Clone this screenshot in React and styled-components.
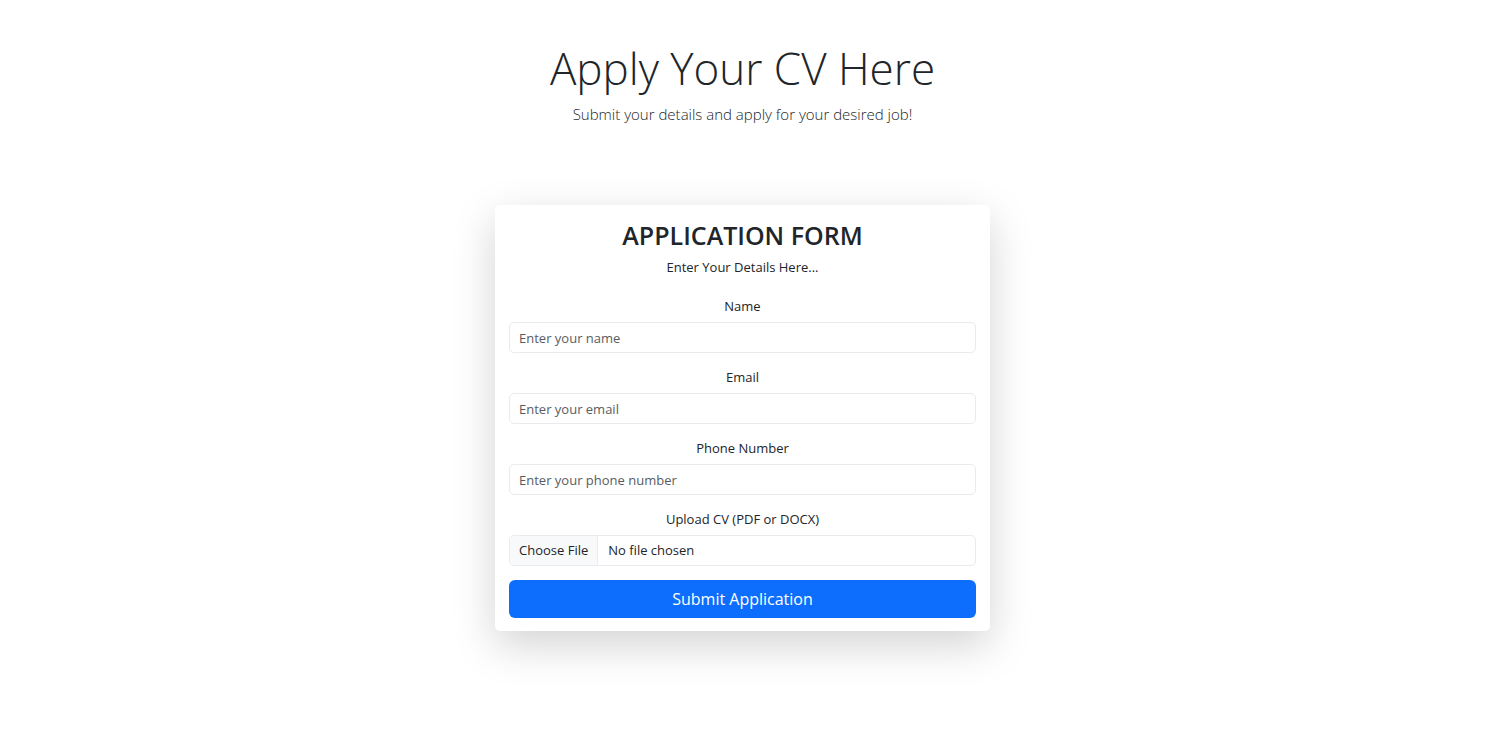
import React from "react";
import styled, { createGlobalStyle } from "styled-components";

const GlobalStyle = createGlobalStyle`
  *, *::before, *::after { box-sizing: border-box; }
  body {
    margin: 0;
    background: #fff;
    color: #212529;
    font-family: "Segoe UI", "Open Sans", "Noto Sans", sans-serif;
    font-size: 13px;
    line-height: 20px;
  }
`;

const Page = styled.main`
  display: flex;
  flex-direction: column;
  align-items: center;
  gap: 81px;
  min-height: 100vh;
  padding: 40px 16px;
  text-align: center;
`;

const Header = styled.header`
  display: flex;
  flex-direction: column;
  gap: 8px;
`;

const Title = styled.h1`
  margin: 0;
  font-size: 44px;
  font-weight: 300;
  line-height: 56px;
`;

const Lead = styled.p`
  margin: 0;
  font-size: 15px;
  font-weight: 300;
  line-height: 20px;
`;

const Card = styled.form`
  width: 100%;
  max-width: 495px;
  padding: 14px 14px 13px;
  background: #fff;
  border-radius: 5px;
  box-shadow: 0 14px 43px rgba(0, 0, 0, 0.175);
`;

const CardTitle = styled.h2`
  margin: 0 0 6px;
  font-size: 25px;
  font-weight: 600;
  line-height: 32px;
`;

const Intro = styled.p`
  margin: 0 0 19px;
`;

const Field = styled.div`
  display: flex;
  flex-direction: column;
  gap: 6px;
  margin-bottom: 14px;
`;

const Input = styled.input`
  width: 100%;
  height: 31px;
  padding: 4px 9px;
  border: 1px solid #e9ebee;
  border-radius: 5px;
  background: #fff;
  color: #212529;
  font: inherit;
  &::placeholder { color: #595c5f; opacity: 1; }
  &:focus { outline: 2px solid #86b7fe; }
`;

const FileInput = styled(Input)`
  padding: 0;
  line-height: 29px;
  overflow: hidden;
  &::file-selector-button {
    height: 29px;
    margin: 0 10px 0 0;
    padding: 0 9px;
    border: 0;
    border-right: 1px solid #e9ebee;
    background: #f8f9fa;
    color: #212529;
    font: inherit;
  }
`;

const Submit = styled.button`
  display: block;
  width: 100%;
  height: 38px;
  padding: 0;
  border: 0;
  border-radius: 6px;
  background: #0d6efd;
  color: #fff;
  font: inherit;
  font-size: 16px;
`;

const fields = [
  { id: "name", label: "Name", type: "text", placeholder: "Enter your name" },
  { id: "email", label: "Email", type: "email", placeholder: "Enter your email" },
  { id: "phone", label: "Phone Number", type: "tel", placeholder: "Enter your phone number" },
];

export default function App() {
  return (
    <>
      <GlobalStyle />
      <Page>
        <Header>
          <Title>Apply Your CV Here</Title>
          <Lead>Submit your details and apply for your desired job!</Lead>
        </Header>
        <Card onSubmit={(e) => e.preventDefault()}>
          <CardTitle>APPLICATION FORM</CardTitle>
          <Intro>Enter Your Details Here...</Intro>
          {fields.map(({ id, label, type, placeholder }) => (
            <Field key={id}>
              <label htmlFor={id}>{label}</label>
              <Input id={id} name={id} type={type} placeholder={placeholder} />
            </Field>
          ))}
          <Field>
            <label htmlFor="cv">Upload CV (PDF or DOCX)</label>
            <FileInput id="cv" name="cv" type="file" accept=".pdf,.docx" />
          </Field>
          <Submit type="submit">Submit Application</Submit>
        </Card>
      </Page>
    </>
  );
}
